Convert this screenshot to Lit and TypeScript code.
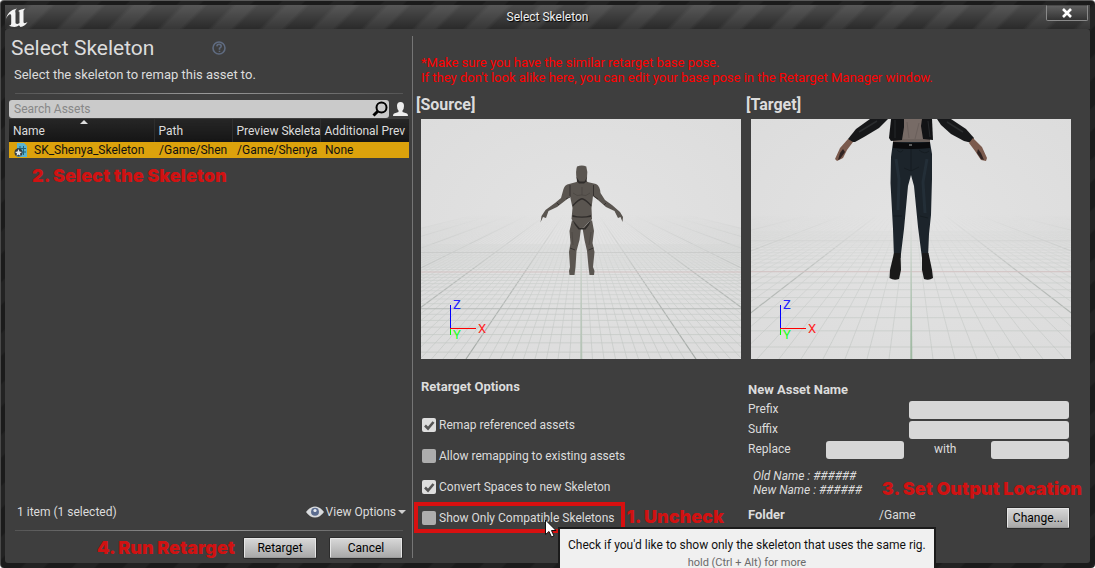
import { LitElement, html, css, svg } from "lit";
import { customElement, property } from "lit/decorators.js";

/** Perspective floor grid, drawn in a 320 x 240 view with the horizon at y = 70. */
const HORIZON = 70;

function floorGrid(spacing: number, zStep: number, zMajor: number) {
  const lines: unknown[] = [];
  for (let k = -60; k <= 60; k++) {
    if (k === 0) continue;
    const major = k % 10 === 0;
    lines.push(svg`<line x1="160" y1=${HORIZON} x2=${160 + k * spacing} y2="240"
      stroke=${major ? "#a4aaa6" : "#c0c5c1"} stroke-width=${major ? 1.2 : 0.6} />`);
  }
  for (let i = -16; i <= 16; i++) {
    const z = zMajor + i * zStep;
    if (z <= 0.0055) continue;
    const y = HORIZON + 1 / z;
    const major = i % 10 === 0;
    const stroke = i === 0 ? "#c9abab" : major ? "#a9aeaa" : "#c0c5c1";
    lines.push(svg`<line x1="0" x2="320" y1=${y} y2=${y}
      stroke=${stroke} stroke-width=${major ? 1 : 0.7} />`);
  }
  return lines;
}

const mannequin = svg`
  <g fill="#5a5550">
    <path d="M156 47.500Q161 45.500 165.300 47.500Q167 53 166 59L163.500 63.500H158L155.500 59Q154.500 52 156 47.500Z"/>
    <path d="M157 61L165 61L166.500 63L175 65Q179 67 179.500 74L184 81L191 86L199 93L202 98L201.500 103L199.500 98L197 99L193.500 92L185 88L177 81L172 77L170.500 89L171 100L165 106L160.500 110L156 106L150.500 100L151.500 89L149 77L145 81L136 88L127.500 92L125 99L122 98L119.500 103.500L120.500 97L124.500 91L134 84L140 79L142.500 70Q144 65.500 148 65L155.500 63Z"/>
    <path d="M151 101L160 109L158.500 121L155.500 132L154.500 148L153.500 156H148.500L148 152L149 148L148 133L149.500 124L148.500 112Z"/>
    <path d="M171 101L161.500 109L163.500 121L166 132L167.500 148L168.500 156H173L173.500 152L172 148L173.500 133L171.500 124L173 112Z"/>
  </g>
  <g fill="#2f2c2a">
    <path d="M155.500 58L158.500 62.500H163.500L166 58L165.500 62.500L163 64.500H158L156 62.500Z"/>
    <path d="M151.500 86Q158 79 161 79Q164 79 170.500 86L170 87.500Q164 81 161 80.500Q158 81 152 87.500Z"/>
    <path d="M151.500 96Q161 99 170 96L170 98Q161 99.500 151.500 98Z"/>
    <path d="M151 100L158.500 109H163.500L170.500 100L168 106L164.500 110.500H157.500L154 106Z"/>
  </g>
  <path d="M149 66V78L145 80M172.500 66V77L177 80M136 84L138 86M183 86L185 84M149 129L154 131M167.500 131L172.500 129"
    fill="none" stroke="#35312f" stroke-width="1"/>
  <path d="M152 74Q156 78 160.500 76Q165 78 169 74M161 68V76M151 113L152 126M170 113L168 126"
    fill="none" stroke="#48433f" stroke-width="0.700"/>`;

const jacketFigure = svg`
  <path d="M119 0H137L128 9L113 18L104 23L98 23L97 20L105 10Z" fill="#17181a"/>
  <path d="M186 0H200L215 10L223 19L221 24L213 22L200 15L190 6Z" fill="#17181a"/>
  <path d="M108 13L126 2M212 13L196 3" stroke="#2a2c2e" stroke-width="1.500"/>
  <path d="M97 20L102 23L96 31L92 39L86 42L84 40L89 29Z" fill="#7b5a4d"/>
  <path d="M222 19L218 24L224 32L230 41L235 42L236 39L231 28Z" fill="#7b5a4d"/>
  <path d="M92 30L94 33L89 40L87 41L89 34Z M227 30L230 34L233 41L230 40L226 34Z" fill="#302423"/>
  <path d="M150 0H173V24H142V20Z" fill="#776b66"/>
  <path d="M142 20H179V24H142Z" fill="#6b605b"/>
  <path d="M156 3L158 19M168 4L164 20" stroke="#6a5f5b" stroke-width="1"/>
  <path d="M140 0H153V8L151 21L140 22L138 19Z" fill="#121315"/>
  <path d="M171 0H181L182 21L172 20L170 7Z" fill="#121315"/>
  <path d="M144 1V19M177 2L179 18" stroke="#2c2e31" stroke-width="0.800"/>
  <path d="M142 23H179L181 35L181 60L180 96L178 115L177 139L171 139L167 108L163 67L160 56L157 67L153 110L149.500 139L143 139L142 110L139.500 64L140 38Z" fill="#1c242b"/>
  <path d="M145 40L148 60L147 91M176 40L172 63L174 94" stroke="#232e37" stroke-width="3" fill="none"/>
  <path d="M160 30V52L153 49M160 52L168 48M146 31Q150 35 152 31M168 31Q174 36 178 32M142 97H151M169 97L177 99" stroke="#141a1f" stroke-width="0.800" fill="none"/>
  <path d="M142 23Q160 25 179 23V29Q160 31 142 29Z" fill="#0b0b0d"/>
  <rect x="158" y="25" width="3" height="2" fill="#5a5b5c"/>
  <path d="M143 134H149.500L150 151L148 160Q143 162 138.500 159L139 151Z" fill="#191919"/>
  <path d="M171 134H177.500L181 151L182 159Q178 162 173 160L171 151Z" fill="#191919"/>`;

@customElement("preview-viewport")
class PreviewViewport extends LitElement {
  @property() kind: "source" | "target" = "source";

  static styles = css`
    :host { display: block; aspect-ratio: 4 / 3; background: #dfdfdf; }
    .scene { display: block; width: 100%; height: 100%; }
    .axis { font: 13px Roboto, sans-serif; }
  `;

  render() {
    const source = this.kind === "source";
    return html`
      <svg class="scene" viewBox="0 0 320 240" preserveAspectRatio="xMidYMid slice" role="img"
        aria-label=${source ? "Source preview" : "Target preview"}>
        <defs>
          <radialGradient id="sky" cx="0.5" cy="0.45" r="0.7">
            <stop offset="0" stop-color="#e3e3e3"/>
            <stop offset="1" stop-color="#dcdcdc"/>
          </radialGradient>
          <linearGradient id="fade" x1="0" y1="0" x2="0" y2="1">
            <stop offset="0.4" stop-color="#000"/>
            <stop offset="0.65" stop-color="#999"/>
            <stop offset="1" stop-color="#fff"/>
          </linearGradient>
          <mask id="floor" maskUnits="userSpaceOnUse" x="0" y="0" width="320" height="240">
            <rect width="320" height="240" fill="url(#fade)"/>
          </mask>
        </defs>
        <rect width="320" height="240" fill="url(#sky)"/>
        <g mask="url(#floor)">
          ${source ? floorGrid(11.5, 0.00037, 0.01205) : floorGrid(22, 0.00072, 0.01209)}
          <path d="M159.600 90H160.400L161.300 240H159.300Z" fill=${source ? "#b3c2b4" : "#9db8a0"}/>
        </g>
        ${source ? mannequin : jacketFigure}
        <path d="M29.500 186V210" stroke="#0000ff"/>
        <path d="M29 209.500H55" stroke="#ff0000"/>
        <path d="M29.500 210V216" stroke="#00ff00"/>
        <text class="axis" x="32" y="190" fill="#2222ff">Z</text>
        <text class="axis" x="57" y="214" fill="#ff2222">X</text>
        <text class="axis" x="32" y="220" fill="#22ff22">Y</text>
      </svg>`;
  }
}

@customElement("app-root")
class AppRoot extends LitElement {
  static styles = css`
    :host {
      display: block;
      font: 12px/16px Roboto, "Open Sans", sans-serif;
      color: #dcdcdc;
    }
    * { box-sizing: border-box; }
    h1, h2, h3, p { margin: 0; }
    button, input { font: inherit; margin: 0; }

    .window {
      display: flex;
      flex-direction: column;
      min-height: 100vh;
      padding: 4px 5px 5px 4px;
      overflow: hidden;
      border-radius: 4px;
      border-top: 1px solid #5a5a5a;
      border-left: 1px solid #4a4a4a;
      background: repeating-linear-gradient(135deg, #1b1b1b 0 18px, #232323 20px 34px, #1b1b1b 36px);
    }
    .titlebar {
      display: grid;
      grid-template-columns: 1fr auto 1fr;
      height: 24px;
      background:
        linear-gradient(rgba(255, 255, 255, 0.18), rgba(255, 255, 255, 0.02)),
        repeating-linear-gradient(135deg, #262626 0 16px, #333333 20px 32px, #262626 36px);
    }
    .logo { width: 24px; height: 24px; }
    .caption {
      align-self: center;
      color: #f0f0f0;
      text-shadow: 1px 1px 1px #000;
    }
    .close {
      justify-self: end;
      display: grid;
      place-items: center;
      width: 42px;
      height: 16px;
      margin-right: 2px;
      padding: 0;
      border: 1px solid #8a8a8a;
      border-top-color: #4a4a4a;
      border-radius: 0 0 2px 2px;
      background: linear-gradient(#606060, #333333);
    }

    .body {
      flex: 1;
      display: grid;
      grid-template-columns: minmax(0, 408fr) minmax(0, 677fr);
      padding: 7px 0 5px;
      border-radius: 3px;
      background: #3e3e3e;
    }

    /* Asset picker */
    .picker {
      display: flex;
      flex-direction: column;
      padding: 0 3px 0 4px;
      border-right: 1px solid #757575;
    }
    .heading {
      display: flex;
      align-items: center;
      gap: 58px;
      padding: 0 2px;
    }
    .heading h1 { font-size: 21px; line-height: 24px; font-weight: 400; }
    .help { width: 14px; height: 14px; }
    .intro { padding: 7px 5px 10px; font-size: 13px; }
    .rule {
      height: 1px;
      margin: 0 6px;
      border: 0;
      background: linear-gradient(90deg, #555555, #9a9a9a 50%, #555555);
    }
    .search { display: flex; gap: 3px; margin-top: 6px; }
    .searchbox {
      flex: 1;
      display: flex;
      align-items: center;
      height: 18px;
      padding: 0 1px 0 5px;
      border-radius: 3px;
      background: #cacaca;
    }
    .searchbox input {
      flex: 1;
      min-width: 0;
      padding: 0;
      border: 0;
      background: none;
      line-height: 16px;
      outline: none;
    }
    .searchbox input::placeholder { color: #878787; opacity: 1; }
    .person { width: 17px; height: 18px; }

    .assets {
      width: 100%;
      margin-top: 1px;
      border-collapse: collapse;
      table-layout: fixed;
    }
    .assets th, .assets td {
      white-space: nowrap;
      text-align: left;
      font-weight: 400;
    }
    .assets th {
      position: relative;
      height: 23px;
      padding: 0 0 0 4px;
      border-left: 1px solid #2e2e2e;
      background: linear-gradient(#262626, #151515);
    }
    .assets td { height: 16px; padding: 0 0 0 5px; background: #dca20c; color: #111111; }
    .assets th:first-child { border-left: 0; }
    .col-name { width: 36.25%; }
    .col-path { width: 19.5%; }
    .col-prev { width: 22%; }
    .sort {
      position: absolute;
      top: 1px;
      left: 49%;
      border: 4px solid transparent;
      border-top: 0;
      border-bottom-color: #dddddd;
    }
    .asset { display: flex; align-items: center; gap: 7px; }
    .asset svg { flex: none; width: 13px; height: 14px; }

    .note {
      font: 900 18px/20px Inter, "DejaVu Sans", sans-serif;
      color: #d01212;
      white-space: nowrap;
    }
    .note-select { padding: 8px 23px; }
    .status {
      display: flex;
      justify-content: space-between;
      margin-top: auto;
      padding: 0 3px 10px 8px;
    }
    .view {
      display: flex;
      align-items: center;
      gap: 2px;
      padding: 0;
      border: 0;
      background: none;
      color: inherit;
    }
    .view .eye { width: 18px; height: 12px; }
    .view .caret { width: 8px; height: 4px; }
    .actions {
      display: flex;
      justify-content: flex-end;
      align-items: center;
      gap: 14px;
      padding: 7px 7px 0 0;
    }
    .actions .note { margin-right: -5px; }
    .btn {
      height: 20px;
      padding: 0 5px;
      border: 1px solid #e6e6e6;
      border-bottom-color: #9b9b9b;
      border-radius: 1px;
      background: linear-gradient(#d6d6d6, #a9a9a9);
      color: #000000;
      line-height: 16px;
      box-shadow: 0 0 0 1px #2c2c2c;
    }
    .actions .btn { width: 72px; }

    /* Retarget panel */
    .retarget {
      display: grid;
      grid-template-columns: 1fr 1fr;
      grid-template-rows: auto auto auto 1fr;
      column-gap: 10px;
      padding: 19px 19px 0 8px;
    }
    .warning {
      grid-column: 1 / -1;
      color: #ff0000;
      font-size: 13px;
      line-height: 15px;
      white-space: nowrap;
    }
    .side-title {
      margin: 10px 0 4px -5px;
      font-size: 16px;
      line-height: 20px;
      font-weight: 700;
    }
    .options { padding-top: 20px; }
    .subhead { font-size: 13px; line-height: 16px; font-weight: 700; }
    .options .subhead { margin-bottom: 14px; }
    .option {
      position: relative;
      display: flex;
      align-items: center;
      gap: 3px;
      width: max-content;
      height: 31px;
      padding-left: 1px;
    }
    .option input {
      appearance: none;
      width: 14px;
      height: 14px;
      border-radius: 2px;
      background: #adadad;
    }
    .option input:checked {
      background: #dedede url("data:image/svg+xml,%3Csvg xmlns='http://www.w3.org/2000/svg' viewBox='0 0 14 14'%3E%3Cpath d='M3 7.500L6 10.500L11.500 4' fill='none' stroke='%23555' stroke-width='2.600'/%3E%3C/svg%3E");
    }
    .highlight {
      position: absolute;
      inset: 0 -10px 0 -7px;
      border: 4px solid #d81010;
    }
    .note-uncheck { position: absolute; left: 100%; top: 5px; padding-left: 12px; }
    .tooltip {
      position: absolute;
      top: 25px;
      left: 137px;
      padding: 8px 8px 0;
      border: 2px solid #1b1b1b;
      background: #f0f0f0;
      color: #111111;
      text-align: center;
      white-space: nowrap;
    }
    .tooltip small { display: block; font-size: 11px; line-height: 20px; color: #6a6a6a; }
    .cursor { position: absolute; left: 124px; top: 17px; width: 12px; height: 19px; }

    .naming { padding: 23px 2px 0 0; margin-left: -3px; }
    .field {
      display: flex;
      align-items: flex-start;
      justify-content: space-between;
      height: 20px;
    }
    .subhead + .field { margin-top: 3px; }
    .field input {
      width: 160px;
      height: 18px;
      padding: 0 4px;
      border: 0;
      border-radius: 3px;
      background: #d7d7d7;
      color: #111111;
    }
    .field .short { width: 78px; }
    .field label:first-child { width: 78px; }
    .field .with { width: 87px; padding-left: 30px; }
    .names {
      display: flex;
      justify-content: space-between;
      align-items: flex-end;
      margin: 8px -13px 0 5px;
      line-height: 14px;
      font-style: italic;
    }
    .names .note { line-height: 16px; }
    .folder {
      display: grid;
      grid-template-columns: 131px 1fr auto;
      align-items: start;
      margin-top: 10px;
    }
    .folder .btn { margin-top: 1px; }
  `;

  render() {
    return html`
      <div class="window">
        <header class="titlebar">
          <svg class="logo" viewBox="0 0 24 24" fill="#f4f4f4" aria-label="Unreal">
            <path d="M1 14C2 9 5 5 12 3.500C9.500 5.500 10.500 6.500 10.500 8V17.500C10.500 19.200 12.500 19.500 14.500 18V7.500C14.500 6 13.500 6 13 6.300C14.500 4.500 17.500 4 20.500 3.500C18.500 5 18.500 5.500 18.500 7V17C18.500 18.500 20.500 18.500 22.500 17C21 20 18 21.500 15.500 22L14 20.300C12.500 21.500 11 22 9.500 22C7 22 5 21.500 3.500 20.300C5 20.800 6.200 20.200 6.200 18.500V11C6.200 9.500 5.500 8.800 4.300 9.500C3 10.300 1.800 12 1 14Z"/>
          </svg>
          <span class="caption">Select Skeleton</span>
          <button class="close" aria-label="Close">
            <svg width="12" height="10" viewBox="0 0 12 10"><path d="M2 1L10 9M10 1L2 9" stroke="#fff" stroke-width="2.600"/></svg>
          </button>
        </header>

        <main class="body">
          <section class="picker">
            <div class="heading">
              <h1>Select Skeleton</h1>
              <svg class="help" viewBox="0 0 14 14" fill="none" stroke="#5f6b80">
                <circle cx="7" cy="7" r="6" stroke-width="1.600"/>
                <path d="M4.900 5.400Q5 3.300 7 3.300Q9.200 3.400 9.200 5.300Q9.100 6.500 7.500 7.300V8.800M7.500 9.700V11" stroke-width="1.600"/>
              </svg>
            </div>
            <p class="intro">Select the skeleton to remap this asset to.</p>
            <hr class="rule" />
            <div class="search">
              <div class="searchbox">
                <input type="text" placeholder="Search Assets" aria-label="Search Assets" />
                <svg width="16" height="16" viewBox="0 0 16 16" fill="none" stroke="#000">
                  <circle cx="9.500" cy="6.500" r="5" stroke-width="2"/><path d="M5.800 10.200L1.500 14.500" stroke-width="3"/>
                </svg>
              </div>
              <svg class="person" viewBox="0 0 17 18" fill="#ededed">
                <path d="M5 6Q5 2 8.500 2Q12 2 12 6Q12 9 10.500 10.500V12L15 13.500Q16 14 16 16H1Q1 14 2 13.500L6.500 12V10.500Q5 9 5 6Z"/>
              </svg>
            </div>
            <table class="assets">
              <thead>
                <tr>
                  <th class="col-name">Name<span class="sort"></span></th>
                  <th class="col-path">Path</th>
                  <th class="col-prev">Preview Skeleta</th>
                  <th>Additional Prev</th>
                </tr>
              </thead>
              <tbody>
                <tr>
                  <td>
                    <span class="asset">
                      <svg viewBox="0 0 13 14">
                        <path d="M3 0H10L13 3V14H3Z" fill="#5bb4cf"/>
                        <path d="M6 3V12M9.500 3V12M3 5.500H12M3 9H12" stroke="#20627c"/>
                        <circle cx="4.500" cy="9.500" r="4" fill="#343c42"/>
                        <path d="M4.500 6L5.500 8.500L8 9L6 10.500L6.500 13L4.500 11.500L2.500 13L3 10.500L1 9L3.500 8.500Z" fill="#dfe6e8"/>
                      </svg>
                      SK_Shenya_Skeleton
                    </span>
                  </td>
                  <td>/Game/Shen</td>
                  <td>/Game/Shenya</td>
                  <td>None</td>
                </tr>
              </tbody>
            </table>
            <p class="note note-select">2. Select the Skeleton</p>

            <div class="status">
              <span>1 item (1 selected)</span>
              <button class="view">
                <svg class="eye" viewBox="0 0 18 12">
                  <path d="M0 6Q4 0.500 9 0.500Q14 0.500 18 6Q14 11.500 9 11.500Q4 11.500 0 6Z" fill="#d9dbdd"/>
                  <circle cx="9" cy="5.800" r="4" fill="#5b6c8f"/><circle cx="9" cy="4.500" r="1.600" fill="#e8ecf2"/>
                </svg>
                View Options
                <svg class="caret" viewBox="0 0 8 4"><path d="M0 0H8L4 4Z" fill="#cfcfcf"/></svg>
              </button>
            </div>
            <hr class="rule" />
            <div class="actions">
              <span class="note">4. Run Retarget</span>
              <button class="btn">Retarget</button>
              <button class="btn">Cancel</button>
            </div>
          </section>

          <section class="retarget">
            <p class="warning">*Make sure you have the similar retarget base pose.<br />If they don't look alike here, you can edit your base pose in the Retarget Manager window.</p>
            <h2 class="side-title">[Source]</h2>
            <h2 class="side-title">[Target]</h2>
            <preview-viewport kind="source"></preview-viewport>
            <preview-viewport kind="target"></preview-viewport>

            <div class="options">
              <h3 class="subhead">Retarget Options</h3>
              <label class="option"><input type="checkbox" checked />Remap referenced assets</label>
              <label class="option"><input type="checkbox" />Allow remapping to existing assets</label>
              <label class="option"><input type="checkbox" checked />Convert Spaces to new Skeleton</label>
              <div class="option">
                <input type="checkbox" id="compatible" />
                <label for="compatible">Show Only Compatible Skeletons</label>
                <span class="highlight"></span>
                <span class="note note-uncheck">1. Uncheck</span>
                <div class="tooltip" role="tooltip">Check if you'd like to show only the skeleton that uses the same rig.<small>hold (Ctrl + Alt) for more</small></div>
                <svg class="cursor" viewBox="0 0 12 19">
                  <path d="M0.500 1V15.500L4 12.500L6.500 18L9 17L6.500 11.500H11Z" fill="#fff" stroke="#111"/>
                </svg>
              </div>
            </div>

            <div class="naming">
              <h3 class="subhead">New Asset Name</h3>
              <div class="field"><label for="prefix">Prefix</label><input id="prefix" type="text" /></div>
              <div class="field"><label for="suffix">Suffix</label><input id="suffix" type="text" /></div>
              <div class="field">
                <label for="replace">Replace</label><input id="replace" class="short" type="text" />
                <label for="with" class="with">with</label><input id="with" class="short" type="text" />
              </div>
              <div class="names">
                <div>Old Name : ######<br />New Name : ######</div>
                <span class="note">3. Set Output Location</span>
              </div>
              <div class="folder">
                <h3 class="subhead">Folder</h3>
                <span>/Game</span>
                <button class="btn">Change...</button>
              </div>
            </div>
          </section>
        </main>
      </div>`;
  }
}
